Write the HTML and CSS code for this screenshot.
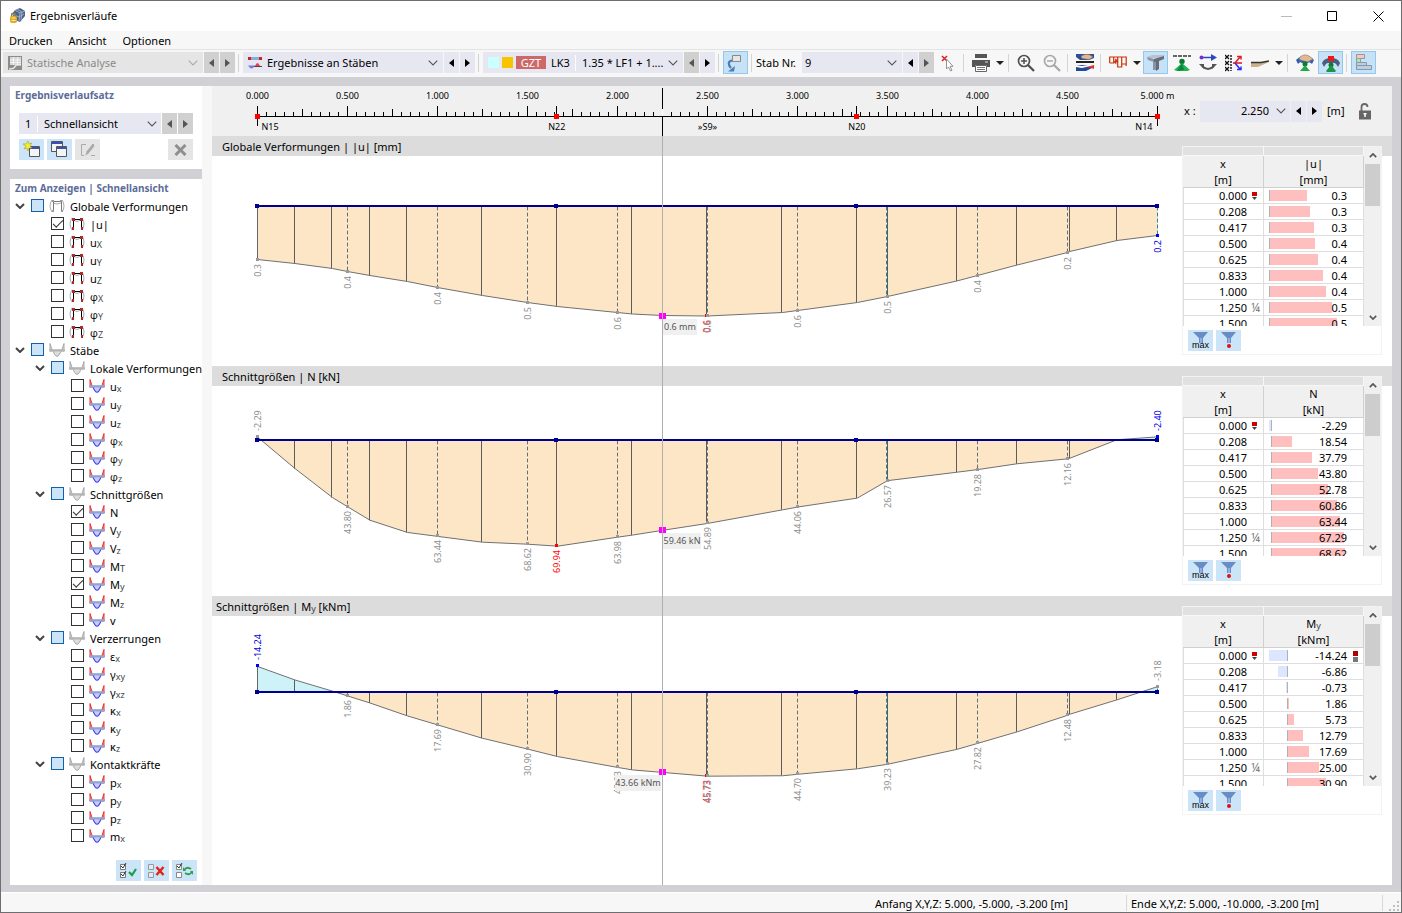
FILE: index.html
```html
<!DOCTYPE html>
<html lang="de">
<head>
<meta charset="utf-8">
<title>Ergebnisverläufe</title>
<link rel="stylesheet" href="styles.css">
</head>
<body>
<svg class="sprite" aria-hidden="true">
  <symbol id="i-chev" viewBox="0 0 10 6"><path d="M.7.7 5 5 9.300.7" fill="none" stroke="currentColor" stroke-width="1.1"/></symbol>
  <symbol id="i-twist" viewBox="0 0 10 6"><path d="M1 1l4 4 4-4" fill="none" stroke="currentColor" stroke-width="2"/></symbol>
  <symbol id="i-left" viewBox="0 0 5 8"><path d="M5 0v8L0 4z" fill="currentColor"/></symbol>
  <symbol id="i-right" viewBox="0 0 5 8"><path d="M0 0v8l5-4z" fill="currentColor"/></symbol>
  <symbol id="i-down" viewBox="0 0 8 4"><path d="M0 0h8L4 4z" fill="#222"/></symbol>
  <symbol id="i-frame" viewBox="0 0 16 14"><path d="M3 1Q-1 7 3 13M13 1q4 6 0 12M4 3q4 3 8 0" fill="none" stroke="#aaa"/><path d="M4.500 12V2.500h8V12" fill="none" stroke="#000"/><path d="M3 1h3v3H3zM11 1h3v3h-3zM3 10h2v3H3zM12 10h2v3h-2z" fill="#b02a2a"/><path d="M6 2.500h5" stroke="#000"/></symbol>
  <symbol id="i-frame-g" viewBox="0 0 16 14"><path d="M3 1Q-1 7 3 13M13 1q4 6 0 12M4 4q4 2 8 0" fill="none" stroke="#aaa"/><path d="M4.500 12V2.500h8V12" fill="none" stroke="#777"/><path d="M3 1h2v2H3zM11 1h2v2h-2zM3 11h2v2H3zM12 11h2v2h-2z" fill="#999"/></symbol>
  <symbol id="i-curve" viewBox="0 0 16 14"><path d="M4 7q2 6 4 6t4-6z" fill="#c9c9ff"/><path d="M3.500 7Q6 13.300 8 13.300T12.500 7" fill="none" stroke="#3c3cf5" stroke-width="1.100"/><path d="M1 .5V8h2.500zM15 .5V8h-2.500z" fill="#f7a0a0" stroke="#ef2020" stroke-width=".9"/><path d="M0 6.200h16v2.300H0z" fill="#8ea6cc"/></symbol>
  <symbol id="i-curve-g" viewBox="0 0 16 14"><path d="M4 7q2 6 4 6t4-6z" fill="#ddd"/><path d="M3.500 7Q6 13.300 8 13.300T12.500 7" fill="none" stroke="#a0a0a0"/><path d="M1 .5V8h2.500zM15 .5V8h-2.500z" fill="#ddd" stroke="#a0a0a0" stroke-width=".9"/><path d="M0 6.200h16v2.300H0z" fill="#b4b4b4"/></symbol>
  <symbol id="i-filter" viewBox="0 0 15 11"><path d="M0 0h15L10 6v5H6V6z" fill="#6a8cc4"/><path d="M7 6h2v5H7z" fill="#8fb0e8"/></symbol>
</svg>

<div class="window">
  <header class="titlebar">
    <svg class="app-icon" width="16" height="16" viewBox="0 0 16 16"><path d="M6 2 11 0l5 3v5l-5 6-5-2-3-6z" fill="#4d6488"/><path d="M6 2l5 3 5-2M11 5l-1 8M3 6l7 3 5-3M8 1l5 3-1 8" fill="none" stroke="#a9bdd8" stroke-width=".8"/><path d="M2.500 9V7q0-2 2-2t2 2v2" fill="none" stroke="#8d7c3a" stroke-width="1.200"/><rect x="1" y="8" width="7" height="7" rx="2" fill="#dfa827"/><path d="M2.500 10h4M2.500 12.500h4" stroke="#fff0a8"/></svg>
    <h1>Ergebnisverläufe</h1>
    <div class="win-buttons">
      <button aria-label="Minimieren"><svg width="11" height="11" viewBox="0 0 11 11"><path d="M0 5.500h11" stroke="#bbb"/></svg></button>
      <button aria-label="Maximieren"><svg width="11" height="11" viewBox="0 0 11 11"><path d="M.5.5h9v9h-9z" fill="none" stroke="#000"/></svg></button>
      <button aria-label="Schließen"><svg width="11" height="11" viewBox="0 0 11 11"><path d="M.5.5l10 10M10.500.5l-10 10" stroke="#000"/></svg></button>
    </div>
  </header>

  <nav class="menubar">
    <button>Drucken</button><button>Ansicht</button><button>Optionen</button>
  </nav>

  <div class="toolbar">
    <div class="combo combo-l off">
      <svg width="14" height="14" viewBox="0 0 14 14"><path d="M0 0h14v14H0z" fill="#8c8c8c"/><path d="M2 1h11v8H2z" fill="#d6d6d6"/><path d="M2 4h11M2 6.500h11M5.500 1v8M9.500 1v8" stroke="#fff" stroke-width=".7"/><path d="M1 13q5 0 6-2.500T13 9" fill="none" stroke="#eee" stroke-width="1.500"/></svg>
      <select aria-label="Analyse" disabled><option>Statische Analyse</option></select><svg class="chev"><use href="#i-chev"/></svg>
    </div>
    <button class="step off" aria-label="Vorherige Analyse"><svg><use href="#i-left"/></svg></button>
    <button class="step off" aria-label="Nächste Analyse"><svg><use href="#i-right"/></svg></button>
    <i class="sep"></i>
    <div class="combo combo-l">
      <svg width="14" height="14" viewBox="0 0 14 14"><path d="M2 2.500h10" stroke="#7fb0e0" stroke-width="3"/><path d="M0 1h3v3H0zM11 1h3v3h-3z" fill="#d02020"/><path d="M5 10.500h9" stroke="#444"/><path d="M7 10q2.500-6 5 0z" fill="#e24545"/><path d="M0 9.500h7q-3.500 6-7 0z" fill="#7a7ae0"/></svg>
      <select aria-label="Ergebnisse"><option>Ergebnisse an Stäben</option></select><svg class="chev"><use href="#i-chev"/></svg>
    </div>
    <button class="step" aria-label="Vorherige Ergebnisse"><svg><use href="#i-left"/></svg></button>
    <button class="step" aria-label="Nächste Ergebnisse"><svg><use href="#i-right"/></svg></button>
    <i class="sep"></i>
    <div class="combo combo-l load">
      <i class="swatch cyan"></i><i class="swatch gold"></i><span class="badge">GZT</span><span class="lk">LK3</span>
      <select aria-label="Lastkombination"><option>1.35 * LF1 + 1....</option></select><svg class="chev"><use href="#i-chev"/></svg>
    </div>
    <button class="step off" aria-label="Vorherige Lastkombination"><svg><use href="#i-left"/></svg></button>
    <button class="step" aria-label="Nächste Lastkombination"><svg><use href="#i-right"/></svg></button>
    <i class="sep"></i>
    <button class="tool on" aria-label="Synchronisieren"><svg width="17" height="18" viewBox="0 0 17 18"><path d="M5.500 1.500h8v6h-8z" fill="#e6e6e6" stroke="#888"/><path d="M5 6.500Q-1 8 4 14" fill="none" stroke="#4a7cb5" stroke-width="2.200"/><path d="M8 12l-1 5.500H1z" fill="#4a7cb5"/></svg></button>
    <i class="sep"></i>
    <label class="lbl" for="stab">Stab Nr.</label>
    <div class="combo combo-s"><select id="stab"><option>9</option></select><svg class="chev"><use href="#i-chev"/></svg></div>
    <button class="step" aria-label="Vorheriger Stab"><svg><use href="#i-left"/></svg></button>
    <button class="step off" aria-label="Nächster Stab"><svg><use href="#i-right"/></svg></button>
    <button class="tool" aria-label="Stab wählen"><svg width="14" height="18" viewBox="0 0 14 18"><path d="M1 2l5 5M6 2 1 7" stroke="#e02020" stroke-width="1.500"/><path d="M5.500 5v10l2-2 2 4 1.500-.7-2-4H12z" fill="#fff" stroke="#888" stroke-width=".9"/></svg></button>
    <i class="sep"></i>
    <button class="tool" aria-label="Drucken"><svg width="18" height="18" viewBox="0 0 18 18"><path d="M3 0h12v4H3zM0 6h18v7h-3v-2H3v2H0z" fill="#555"/><path d="M3.500 11.500h11v6h-11z" fill="#fff" stroke="#666"/><path d="M5 13.500h8M5 15.500h8" stroke="#777"/><path d="M13 8h3" stroke="#ddd"/></svg></button>
    <button class="drop" aria-label="Druckoptionen"><svg><use href="#i-down"/></svg></button>
    <i class="sep"></i>
    <button class="tool" aria-label="Vergrößern"><svg width="18" height="18" viewBox="0 0 18 18"><circle cx="7" cy="7" r="5.500" fill="none" stroke="#505050" stroke-width="1.700"/><path d="M4 7h6M7 4v6" stroke="#505050" stroke-width="1.500"/><path d="M11 11l6 6" stroke="#505050" stroke-width="2.300"/></svg></button>
    <button class="tool" aria-label="Verkleinern"><svg width="18" height="18" viewBox="0 0 18 18"><circle cx="7" cy="7" r="5.500" fill="none" stroke="#a8a8a8" stroke-width="1.700"/><path d="M4 7h6" stroke="#a8a8a8" stroke-width="1.500"/><path d="M11 11l6 6" stroke="#a8a8a8" stroke-width="2.300"/></svg></button>
    <i class="sep"></i>
    <button class="tool" aria-label="Ergebnisdiagramm"><svg width="18" height="17" viewBox="0 0 18 17"><path d="M0 0h18v4l-5 2H4L0 3z" fill="#2c4f98"/><path d="M5 2q5-3 9-1l3 2-4 2.500-7-1z" fill="#e0b898" stroke="#8c6a50" stroke-width=".6"/><path d="M0 7h18v2H0z" fill="#222"/><path d="M0 11h18v2l-8 4H0z" fill="#24489a"/><path d="M8 13l10-3v5q-4-2-10-2z" fill="#d23b3b"/><path d="M0 11l6 1 12-2v1L6 14l-6-1z" fill="#fff"/></svg></button>
    <i class="sep"></i>
    <button class="tool" aria-label="Verlauf"><svg width="18" height="14" viewBox="0 0 18 14"><path d="M.7 7V1h16.500v9M.7 7h4V1M4.700 5l2 2V3l2 4V1M8.700 7v4h4V1M12.700 8h4.500" fill="none" stroke="#c8330c" stroke-width="1.200"/></svg></button>
    <button class="drop" aria-label="Verlaufsoptionen"><svg><use href="#i-down"/></svg></button>
    <button class="tool on" aria-label="Querschnitt"><svg width="18" height="17" viewBox="0 0 18 17"><path d="M0 3l5-2h13l-4 3H2z" fill="#b9c2ce"/><path d="M0 3l7 2v3L1 6zM6 6h4v10H6z" fill="#8a94a2"/><path d="M7 5l10-3v3l-5 2v8l-3 2V8H7z" fill="#646d7a"/></svg></button>
    <button class="tool" aria-label="Lager"><svg width="18" height="18" viewBox="0 0 18 18"><path d="M0 2h18" stroke="#666" stroke-width="2" stroke-dasharray="4 1"/><circle cx="9" cy="7.500" r="2.700" fill="#067a2e"/><path d="M9 9l8 7-3 1H4l-3-1z" fill="#26b057"/><path d="M9 9l2 7-7 1z" fill="#0b8738"/></svg></button>
    <button class="tool" aria-label="Richtung"><svg width="18" height="17" viewBox="0 0 18 17"><path d="M2 3.500h12" stroke="#2a48c0" stroke-width="1.500"/><path d="M12 0l6 3.500L12 7z" fill="#2a48c0"/><circle cx="2.500" cy="3.500" r="2" fill="#7a30d0"/><path d="M3 12q6 6 12 0" fill="none" stroke="#555" stroke-width="1.800"/><path d="M0 10h5v5zM18 10h-5v5z" fill="#555"/></svg></button>
    <button class="tool" aria-label="Lasten"><svg width="18" height="18" viewBox="0 0 18 18"><path d="M0 1l4 4M4 1 0 5M0 7l4 4M4 7l-4 4M0 13l4 4M4 13l-4 4" stroke="#111" stroke-width="1.300"/><path d="M6 1v16" stroke="#222" stroke-width="1.500" stroke-dasharray="2 1"/><path d="M8 9h9" stroke="#e02020" stroke-width="1.600"/><path d="M10 9l5-6M12 2.500h4v3" fill="none" stroke="#e02020" stroke-width="1.500"/><path d="M10 9l5 6M12 15.500h4v-3" fill="none" stroke="#2a2aff" stroke-width="1.500"/></svg></button>
    <button class="tool" aria-label="Glättung"><svg width="18" height="8" viewBox="0 0 18 8"><path d="M0 3h18L7 8H0z" fill="#cbb08b"/><path d="M0 3.500h10L18 2" fill="none" stroke="#333" stroke-width="1.500"/></svg></button>
    <button class="drop" aria-label="Glättungsoptionen"><svg><use href="#i-down"/></svg></button>
    <i class="sep"></i>
    <button class="tool" aria-label="Lager anzeigen"><svg width="18" height="18" viewBox="0 0 18 18"><path d="M0 6q8-8 18 0l-2 4q-3-3-4-1H6q-2-2-4 1z" fill="#2f62b4"/><path d="M3 4q5-5 10-2l4 3-5 3-8-2z" fill="#e0b898" stroke="#8c6a50" stroke-width=".6"/><circle cx="9" cy="10" r="2.500" fill="#0a7c30"/><path d="M9 11l5 6H4z" fill="#22a850"/></svg></button>
    <button class="tool on" aria-label="Lagerergebnisse"><svg width="18" height="18" viewBox="0 0 18 18"><path d="M0 9q2-5 9-5t9 5l-2 4q-2-4-4-4H6q-2 0-4 4z" fill="#4a5e80"/><path d="M6 2h6v5H6z" fill="#ef1818"/><circle cx="9" cy="11" r="2.500" fill="#0a7c30"/><path d="M9 11l5 6-1 1H5l-1-1z" fill="#1b9546"/></svg></button>
    <i class="sep"></i>
    <button class="tool on" aria-label="Wertetabelle"><svg width="18" height="17" viewBox="0 0 18 17"><path d="M1.500.5h8v4h-8z" fill="#f4c6c6" stroke="#999"/><path d="M1.500 4.500h4v4h-4z" fill="#b8e0b8" stroke="#8aa88a"/><path d="M1.500 8.500h10v3h-10zM1.500 11.500h15v4h-15z" fill="#b9cfe2" stroke="#8898a8"/></svg></button>
  </div>

  <main class="main">
    <aside class="side">
      <section class="set-panel">
        <h2>Ergebnisverlaufsatz</h2>
        <div class="set-row">
          <div class="combo grow"><span class="num">1</span><select aria-label="Ergebnisverlaufsatz"><option>Schnellansicht</option></select><svg class="chev"><use href="#i-chev"/></svg></div>
          <button class="step off" aria-label="Vorheriger Satz"><svg><use href="#i-left"/></svg></button>
          <button class="step off" aria-label="Nächster Satz"><svg><use href="#i-right"/></svg></button>
        </div>
        <div class="set-tools">
          <button class="sq" aria-label="Neu"><svg width="18" height="17" viewBox="0 0 18 17"><path d="M6.500 5.500h10v10h-10z" fill="#f4f4f4" stroke="#555"/><path d="M7 6h9v2H7z" fill="#3a50b8"/><path d="M5 0l1 3 3-1-2 3 2 2-3 0-1 3-1-3-3 1 2-3-3-2h3z" fill="#f5ee30" stroke="#a09020" stroke-width=".5"/></svg></button>
          <button class="sq" aria-label="Kopieren"><svg width="17" height="17" viewBox="0 0 17 17"><path d="M.5.5h11v10H.5z" fill="#f4f4f4" stroke="#555"/><path d="M1 1h10v2H1z" fill="#3a50b8"/><path d="M5.500 5.500h10v10h-10z" fill="#f4f4f4" stroke="#555"/><path d="M6 6h9v2H6z" fill="#3a50b8"/></svg></button>
          <button class="sq off" aria-label="Bearbeiten"><svg width="16" height="14" viewBox="0 0 16 14"><path d="M6 1.500H1.500v11H4M12 1.500h2M11 12.500h4" fill="none" stroke="#aaa"/><path d="M5.500 12.500l1-4 6-7.500 2 2-6 7.500z" fill="#aaa"/></svg></button>
          <button class="sq off last" aria-label="Löschen"><svg width="13" height="12" viewBox="0 0 13 12"><path d="M1.500 1l10 10M11.500 1l-10 10" stroke="#8f8f8f" stroke-width="3"/></svg></button>
        </div>
      </section>
      <section class="tree-panel">
        <h2>Zum Anzeigen | Schnellansicht</h2>
        <ul class="tree" id="tree"></ul>
        <div class="tree-tools">
          <button class="sq" aria-label="Alle auswählen"><svg width="17" height="16" viewBox="0 0 17 16"><path d="M.5 1.500h5v5h-5zM.5 9.500h5v5h-5z" fill="#fff" stroke="#777"/><path d="M1 3l2 2 3-5M1 11l2 2 3-5" fill="none" stroke="#333"/><path d="M9 9l3 3 4-6" fill="none" stroke="#18a048" stroke-width="2.200"/></svg></button>
          <button class="sq" aria-label="Alle abwählen"><svg width="17" height="16" viewBox="0 0 17 16"><path d="M.5 1.500h5v5h-5zM.5 9.500h5v5h-5z" fill="#dcecf8" stroke="#999"/><path d="M8.500 4l7 8M15.500 4l-7 8" stroke="#e02418" stroke-width="2.500"/></svg></button>
          <button class="sq" aria-label="Auswahl umkehren"><svg width="17" height="16" viewBox="0 0 17 16"><path d="M.5 1.500h5v5h-5zM.5 9.500h5v5h-5z" fill="#fff" stroke="#888"/><path d="M1 3l2 2 3-5" fill="none" stroke="#333"/><path d="M8 7q3-4 7-1M16 9q-3 4-7 1" fill="none" stroke="#2fa050" stroke-width="1.800"/><path d="M7 4v4h3zM17 12V8h-3z" fill="#2fa050"/></svg></button>
        </div>
      </section>
    </aside>
    <div class="splitter"></div>
    <div class="results">
      <div class="ruler-area">
        <svg class="ruler" id="ruler"></svg>
        <div class="xpos">
          <label for="xval">x :</label>
          <div class="combo xcombo"><input id="xval" value="2.250"><svg class="chev"><use href="#i-chev"/></svg></div>
          <button class="step" aria-label="x verringern"><svg><use href="#i-left"/></svg></button>
          <button class="step" aria-label="x erhöhen"><svg><use href="#i-right"/></svg></button>
          <span class="unit">[m]</span>
          <button class="lock" aria-label="Position sperren"><svg width="14" height="17" viewBox="0 0 14 17"><path d="M3.500 8V4q0-3 3-3t3 3" fill="none" stroke="#666" stroke-width="1.800"/><path d="M1 7.500h12v9H1z" fill="#666"/><path d="M6.300 10h1.500v4H6.300zM5.500 10h3v1.500h-3z" fill="#fff"/></svg></button>
        </div>
      </div>
      <div class="charts" id="charts"></div>
    </div>
  </main>

  <footer class="statusbar">
    <span class="start">Anfang X,Y,Z: 5.000, -5.000, -3.200 [m]</span>
    <span class="end">Ende X,Y,Z: 5.000, -10.000, -3.200 [m]</span>
    <svg class="grip" width="11" height="11" viewBox="0 0 11 11"><path d="M8 0h2v2H8zM4 4h2v2H4zM8 4h2v2H8zM0 8h2v2H0zM4 8h2v2H4zM8 8h2v2H8z" fill="#c0c0c0"/></svg>
  </footer>
</div>
<script src="app.js"></script>
</body>
</html>
```
FILE: styles.css
```css
* { box-sizing: border-box; }

body {
  margin: 0;
  font: 11px/16px "Noto Sans", "Open Sans", sans-serif;
  color: #000;
}

button, input, select {
  font: inherit;
  color: inherit;
  border: 0;
  padding: 0;
  margin: 0;
  background: none;
}

h1, h2, h3 { margin: 0; font-size: 11px; font-weight: 400; }
i { font-style: normal; }
svg { display: block; flex: none; }
.sprite { position: absolute; width: 0; height: 0; }

.window {
  display: flex;
  flex-direction: column;
  height: 100vh;
  min-height: 880px;
  border: 1px solid #6e6e70;
  background: #f7f7f7;
}

/* title and menu */
.titlebar {
  display: flex;
  align-items: center;
  height: 30px;
  flex: none;
  padding-left: 8px;
  background: #fff;
}
.titlebar h1 { margin-left: 5px; }
.win-buttons { display: flex; margin-left: auto; }
.win-buttons button {
  display: grid;
  place-items: center;
  width: 46px;
  height: 28px;
}
.menubar {
  display: flex;
  gap: 16px;
  height: 19px;
  flex: none;
  padding: 2px 0 0 8px;
  border-bottom: 1px solid #e3e3e3;
}

/* toolbar */
.toolbar {
  display: flex;
  align-items: center;
  gap: 1px;
  height: 27px;
  flex: none;
  padding: 0 0 2px 2px;
}
.combo {
  display: flex;
  align-items: center;
  height: 21px;
  padding: 0 5px;
  background: #e7e7f2;
}
.combo-l { width: 200px; }
.combo-s { width: 100px; padding-left: 3px; }
.combo select, .combo input {
  flex: 1;
  min-width: 0;
  appearance: none;
  outline: 0;
}
.combo > svg + select { margin-left: 5px; }
.combo.off { background: #e5e5e5; color: #8a8a8a; }
.combo select:disabled { opacity: 1; }
.chev { width: 10px; height: 6px; color: #555; }
.combo.off .chev { color: #aaa; }
.step {
  display: grid;
  place-items: center;
  width: 15px;
  height: 21px;
  background: #e7e7f2;
}
.toolbar .step, .xpos .step { padding-right: 1px; }
.step svg { width: 5px; height: 8px; }
.step.off { background: #d0d0d0; color: #555; }
.sep {
  width: 1px;
  height: 18px;
  margin: 0 3px 0 2px;
  background: #d4d4d4;
}
.swatch { width: 11px; height: 11px; margin-right: 3px; }
.cyan { background: #ccffff; }
.gold { background: #f6c400; }
.badge {
  width: 30px;
  height: 13px;
  line-height: 13px;
  text-align: center;
  background: #cd6a69;
  color: #fff;
}
.lk {
  width: 30px;
  height: 16px;
  padding-left: 5px;
  margin-right: 6px;
  border-right: 1px solid #fff;
}
.tool {
  display: grid;
  place-items: center;
  width: 25px;
  height: 23px;
}
.tool.on { background: #c7e2f7; border: 1px solid #90c8f0; }
.drop { display: grid; place-items: center; width: 11px; height: 21px; }
.drop svg { width: 8px; height: 4px; }
.lbl { width: 45px; white-space: nowrap; }

/* main area */
.main {
  display: flex;
  flex: 1;
  min-height: 0;
  padding: 9px 9px 7px;
  border-bottom: 1px solid #fff;
  background: #d0d0d5;
}
.side {
  display: flex;
  flex-direction: column;
  gap: 10px;
  width: 192px;
  flex: none;
}
.side h2 {
  padding-left: 5px;
  font-size: 10px;
  font-weight: 700;
  line-height: 18px;
  color: #5c6d98;
  white-space: nowrap;
}
.set-panel { height: 83px; background: #fff; }
.set-row { display: flex; gap: 1px; padding: 9px 9px 0; }
.set-row .combo { padding: 0 4px 0 6px; }
.grow { flex: 1; }
.num { width: 13px; margin-right: 6px; border-right: 1px solid #fff; }
.set-tools { display: flex; gap: 3px; padding: 5px 9px 0; }
.sq {
  display: grid;
  place-items: center;
  width: 25px;
  height: 21px;
  background: #cce4f7;
}
.sq.off { background: #e5e5e5; }
.sq.last { margin-left: auto; }

.tree-panel {
  display: flex;
  flex-direction: column;
  flex: 1;
  min-height: 0;
  background: #fff;
}
.tree { margin: 0; padding: 0 0 0 5px; list-style: none; }
.tree li {
  display: flex;
  align-items: center;
  height: 18px;
  white-space: nowrap;
}
.tree .lvl1 { padding-left: 20px; }
.tree .lvl2 { padding-left: 40px; }
.twist { width: 10px; height: 6px; margin-right: 6px; color: #444; }
.twist svg { width: 10px; height: 6px; }
.tree input {
  appearance: none;
  display: grid;
  place-items: center;
  width: 13px;
  height: 13px;
  margin-bottom: 2px;
  flex: none;
  border: 1px solid #333;
  background: #fff;
}
.tree input.mixed { background: #cce4f7; border-color: #1260a8; }
.tree input:checked::after {
  content: "";
  width: 9px;
  height: 4px;
  margin-bottom: 2px;
  border: solid #333;
  border-width: 0 0 1px 1px;
  transform: rotate(-45deg);
}
.tree label { display: flex; align-items: center; }
.tree label svg { width: 16px; height: 14px; margin: 0 5px; }
.name { padding-top: 2px; }
.greek { font-family: "Open Sans", "Noto Sans", sans-serif; }
sub { font-size: 9px; line-height: 0; vertical-align: -1px; color: #444; }
.tree-tools {
  display: flex;
  justify-content: flex-end;
  gap: 3px;
  margin-top: auto;
  padding: 0 5px 4px;
}
.splitter { width: 10px; flex: none; background: #f7f7f7; }

/* results */
.results {
  display: flex;
  flex-direction: column;
  flex: 1;
  min-width: 0;
  background: #fff;
}
.ruler-area {
  display: grid;
  align-items: center;
  height: 50px;
  flex: none;
  background: #f0f0f0;
}
.ruler { grid-area: 1 / 1; width: 100%; height: 50px; }
.ruler text { font-size: 9px; text-anchor: middle; }
.ruler .from { text-anchor: start; }
.ruler .to { text-anchor: end; }
.xpos {
  grid-area: 1 / 1;
  justify-self: end;
  display: flex;
  align-items: center;
  gap: 1px;
  padding-right: 20px;
}
.xpos label { width: 15px; }
.xcombo { width: 90px; padding-right: 4px; }
.xcombo input { text-align: right; margin-right: 7px; }
.unit { width: 34px; padding-left: 4px; }

.charts { position: relative; display: flex; flex-direction: column; flex: 1; }
.chart { position: relative; height: 230px; }
.chart:last-of-type { flex: 1; }
.chart h3 {
  height: 20px;
  padding: 3px 10px 0;
  background: #dcdcdc;
}
.chart:last-of-type h3 { padding-left: 4px; }
.plot { width: 100%; height: 210px; }
.plot text { font-size: 9px; fill: #8e8e8e; }
.plot .min { fill: #0000e8; }
.plot .max { fill: #f00; }
.plot .tag-text { fill: #555; text-anchor: middle; }
.cursor {
  position: absolute;
  top: 0;
  bottom: 0;
  left: calc(45px + (100% - 280px) * 0.45);
  width: 1px;
  background: #b0b0b0;
}

/* value table over the chart */
.values {
  position: absolute;
  top: 10px;
  right: 10px;
  width: 200px;
  border: 1px solid #f3f3f3;
  background: #fff;
}
.grid-box { display: flex; height: 179px; }
.clip { flex: 1; overflow: hidden; }
.clip table {
  width: 181px;
  table-layout: fixed;
  border-collapse: separate;
  border-spacing: 0;
}
.clip col:first-child { width: 81px; }
.clip th, .clip td {
  position: relative;
  padding: 0;
  font-weight: 400;
  border-right: 1px solid #dedede;
}
.strip th { height: 10px; background: #e1e1e1; border-color: #f7f7f7; border-bottom: 1px solid #f7f7f7; }
.head th { height: 32px; line-height: 16px; background: #f0f0f0; border-color: #d0d0d0; vertical-align: top; }
.head th { box-shadow: inset 0 -1px #d0d0d0; }
.clip td {
  height: 16px;
  line-height: 15px;
  padding-right: 16px;
  border-bottom: 1px solid #dedede;
  text-align: right;
}
.strip th { height: 9px; }
.clip td:first-child { border-left: 1px solid #dedede; }
.clip td span { position: relative; }
.bar { position: absolute; top: 2px; height: 11px; background: #ffbfbf; }
.bar.neg { background: #dce6ff; }
.zero { position: absolute; top: 2px; width: 1px; height: 11px; background: #b0b0b8; }
.mark { position: absolute; right: 5px; top: 3px; }
.clip td .quarter { position: absolute; right: 3px; top: 0; font-size: 12px; color: #777; }
.scroll {
  display: flex;
  flex-direction: column;
  align-items: center;
  width: 17px;
  padding: 6px 1px;
  background: #f0f0f0;
}
.scroll svg { width: 8px; height: 5px; stroke: #555; color: #555; }
.thumb { width: 15px; height: 42px; margin-top: 6px; background: #cdcdcd; }
.scroll .dn { margin-top: auto; transform: rotate(180deg); }
.filters { display: flex; gap: 3px; height: 28px; padding: 4px 5px 0; }
.filters .sq { position: relative; align-items: start; padding: 2px 1px 0 0; }
.filters .sq span {
  position: absolute;
  bottom: 0;
  font: 9px/12px "Liberation Sans", sans-serif;
}
.dot { position: absolute; bottom: 3px; width: 4px; height: 4px; border-radius: 2px; background: #e01010; }

/* status bar */
.statusbar {
  display: flex;
  align-items: center;
  justify-content: flex-end;
  height: 19px;
  flex: none;
}
.statusbar span { white-space: nowrap; line-height: 15px; padding-top: 1px; border-right: 1px solid #d8d8d8; }
.start { width: 252px; }
.end { width: 256px; padding-left: 4px; }
.grip { align-self: flex-end; margin: 0 1px 0 6px; }
```
FILE: app.js
```js
// Tree of available result types: [level, label, state]
const F = 'frame', C = 'curve';
const tree = [
  [0, 'Globale Verformungen', 'mixed', F], [1, '|u|', 'on', F], [1, 'u_X', '', F], [1, 'u_Y', '', F],
  [1, 'u_Z', '', F], [1, 'φ_X', '', F], [1, 'φ_Y', '', F], [1, 'φ_Z', '', F],
  [0, 'Stäbe', 'mixed', C],
  [1, 'Lokale Verformungen', 'mixed', C], [2, 'u_x', ''], [2, 'u_y', ''], [2, 'u_z', ''],
  [2, 'φ_x', ''], [2, 'φ_y', ''], [2, 'φ_z', ''],
  [1, 'Schnittgrößen', 'mixed', C], [2, 'N', 'on'], [2, 'V_y', ''], [2, 'V_z', ''], [2, 'M_T', ''],
  [2, 'M_y', 'on'], [2, 'M_z', ''], [2, 'v', ''],
  [1, 'Verzerrungen', 'mixed', C], [2, 'ε_x', ''], [2, 'γ_xy', ''], [2, 'γ_xz', ''],
  [2, 'κ_x', ''], [2, 'κ_y', ''], [2, 'κ_z', ''],
  [1, 'Kontaktkräfte', 'mixed', C], [2, 'p_x', ''], [2, 'p_y', ''], [2, 'p_z', ''], [2, 'm_x', '']
];
const withSub = s => s.replace(/_(\w+)/, '<sub>$1</sub>');

document.getElementById('tree').innerHTML = tree.map(([lvl, label, state, icon = C], i) => {
  const group = state === 'mixed';
  return `<li class="lvl${lvl}">
    <span class="twist">${group ? '<svg><use href="#i-twist"/></svg>' : ''}</span>
    <input type="checkbox" id="t${i}" class="${state}" ${state === 'on' ? 'checked' : ''}>
    <label for="t${i}"><svg><use href="#i-${icon}${group ? '-g' : ''}"/></svg><span class="name${label[0] === 'φ' ? ' greek' : ''}">${withSub(label)}</span></label>
  </li>`;
}).join('');

// Result diagrams along the member. Points: [x in m, value].
const solid = [0.208, 0.417, 0.625, 0.833, 1.25, 1.667, 2.083, 2.499, 2.917, 3.333, 3.506, 3.885, 4.22, 4.514, 4.777];
const dashed = [0.5, 1, 1.5, 2, 2.5, 3, 3.494, 4, 4.5];
const nodes = [0, 1.663, 3.33, 5];
const xs = [0, 0.208, 0.417, 0.5, 0.625, 0.833, 1, 1.25, 1.5, 1.667, 2, 2.083, 2.25, 2.5, 2.917, 3, 3.333, 3.5, 3.885, 4, 4.22, 4.5, 4.512, 4.775, 5];
const rowX = ['0.000', '0.208', '0.417', '0.500', '0.625', '0.833', '1.000', '1.250', '1.500'];

const charts = [
  {
    title: 'Globale Verformungen | |u| [mm]', head: '|u|', unit: '[mm]', base: 50, scale: 1, ends: true,
    y: [53, 57, 62, 65, 69, 75, 81, 89, 96, 100, 106, 107.500, 109, 109.500, 106, 104, 96, 90, 74.500, 69, 58.500, 46, 45, 34, 29],
    labels: [[0, '0.3'], [.5, '0.4'], [1, '0.4'], [1.5, '0.5'], [2, '0.6'], [2.495, '0.6', 'max'], [2.5, '0.6'], [3, '0.6'], [3.5, '0.5'], [4, '0.4'], [4.5, '0.2'], [5, '0.2', 'min']],
    tag: '0.6 mm', tagW: 34, zero: 5, perPx: [38, 41, 45, 46, 49, 54, 57, 63, 68],
    rows: ['0.3', '0.3', '0.3', '0.4', '0.4', '0.4', '0.4', '0.5', '0.5']
  },
  {
    title: 'Schnittgrößen | N [kN]', head: 'N', unit: '[kN]', base: 54, scale: 1.511,
    y: [-2.29, 18.54, 37.79, 43.8, 52.78, 60.86, 63.44, 67.29, 68.62, 69.94, 63.98, 62.6, 59.46, 54.89, 45.9, 44.06, 38.1, 26.57, 21, 19.28, 15.4, 12.16, 11.8, -.5, -2.4],
    labels: [[0, '-2.29'], [.5, '43.80'], [1, '63.44'], [1.5, '68.62'], [1.663, '69.94', 'max'], [2, '63.98'], [2.5, '54.89'], [3, '44.06'], [3.5, '26.57'], [4, '19.28'], [4.5, '12.16'], [5, '-2.40', 'min']],
    tag: '59.46 kN', tagW: 38, zero: 7, perPx: [-2, 21, 41, 47, 57, 66, 69, 73, 74],
    rows: ['-2.29', '18.54', '37.79', '43.80', '52.78', '60.86', '63.44', '67.29', '68.62']
  },
  {
    title: 'Schnittgrößen | M_y [kNm]', head: 'M_y', unit: '[kNm]', base: 76, scale: 1.83, ends: true,
    y: [-14.24, -6.86, -.73, 1.86, 5.73, 12.79, 17.69, 25, 30.9, 35, 40.93, 42.3, 43.66, 45.73, 45.5, 44.7, 41.7, 39.23, 31.1, 27.82, 21.5, 12.48, 11.9, 4, -3.18],
    labels: [[0, '-14.24', 'min'], [.5, '1.86'], [1, '17.69'], [1.5, '30.90'], [2, '40.93'], [2.495, '45.73', 'max'], [2.5, '45.73'], [3, '44.70'], [3.5, '39.23'], [4, '27.82'], [4.5, '12.48'], [5, '-3.18']],
    tag: '43.66 kNm', tagW: 46, left: true, zero: 23, perPx: [-18, -9, -1, 2, 7, 16, 22, 32, 39],
    rows: ['-14.24', '-6.86', '-0.73', '1.86', '5.73', '12.79', '17.69', '25.00', '30.90'], extreme: true
  }
];

function valueTable(c) {
  const rows = rowX.map((x, i) => {
    const w = c.perPx[i];
    const first = i === 0 ? '<svg class="mark" width="7" height="9"><path d="M1 1h5v4H1z" fill="#d00000"/><path d="M1 6h5L3.500 9z" fill="#444"/></svg>' : '';
    const quarter = i === 7 ? '<span class="quarter">¼</span>' : '';
    const ext = c.extreme && i === 0 ? '<svg class="mark" width="5" height="11"><path d="M0 0h5v5H0z" fill="#b00000"/><path d="M0 6h5v5H0z" fill="#777"/></svg>' : '';
    return `<tr><td>${x}${first}${quarter}</td><td><i class="bar ${w < 0 ? 'neg' : ''}" style="left:${c.zero + Math.min(w, 0)}px;width:${Math.abs(w)}px"></i><i class="zero" style="left:${c.zero}px"></i><span>${c.rows[i]}</span>${ext}</td></tr>`;
  }).join('');
  return `<div class="values"><div class="grid-box"><div class="clip"><table><colgroup><col><col></colgroup>
    <thead><tr class="strip"><th></th><th></th></tr><tr class="head"><th>x<br>[m]</th><th>${withSub(c.head)}<br>${c.unit}</th></tr></thead>
    <tbody>${rows}</tbody></table></div>
    <div class="scroll"><svg class="up" viewBox="0 0 10 6"><path d="M1 5l4-4 4 4" fill="none" stroke-width="2"/></svg><div class="thumb"></div><svg class="dn" viewBox="0 0 10 6"><path d="M1 5l4-4 4 4" fill="none" stroke-width="2"/></svg></div></div>
    <div class="filters"><button class="sq" aria-label="Nur Extremwerte"><svg width="15" height="11"><use href="#i-filter"/></svg><span>max</span></button>
    <button class="sq" aria-label="Nur Knotenwerte"><svg width="15" height="11"><use href="#i-filter"/></svg><i class="dot"></i></button></div></div>`;
}

document.getElementById('charts').innerHTML = charts.map(c =>
  `<section class="chart"><h3>${withSub(c.title)}</h3><svg class="plot"></svg>${valueTable(c)}</section>`
).join('') + '<div class="cursor"></div>';

function valueAt(c, x) {
  let i = 1;
  while (i < xs.length - 1 && xs[i] < x) i++;
  const t = (x - xs[i - 1]) / (xs[i] - xs[i - 1]);
  return c.y[i - 1] + t * (c.y[i] - c.y[i - 1]);
}

function drawChart(c, svg, px) {
  const b = c.base + .5;
  const py = x => b + valueAt(c, x) * c.scale;
  const pts = xs.map((x, i) => [px(x), b + c.y[i] * c.scale]);
  const line = pts.map(p => p.join()).join(' ');
  const id = 'c' + c.base;
  let s = `<clipPath id="${id}a"><rect width="100%" height="${b}"/></clipPath><clipPath id="${id}b"><rect y="${b}" width="100%" height="200"/></clipPath>`;
  const area = `${px(0)},${b} ${line} ${px(5)},${b}`;
  s += `<polygon points="${area}" fill="#cdf2f8" clip-path="url(#${id}a)"/><polygon points="${area}" fill="#fde6c6" clip-path="url(#${id}b)"/>`;
  const bar = (x, extra, shift = 0) => { const X = Math.floor(px(x) - shift) + .5; return `<line x1="${X}" x2="${X}" y1="${b}" y2="${py(x)}" ${extra}/>`; };
  s += solid.map(x => bar(x, 'stroke="#5c5c5c"', .7)).join('');
  s += dashed.map(x => bar(x, 'stroke="#fff"') + bar(x, `stroke="${x === 3.494 ? '#2b8a90' : '#6d6d64'}" stroke-dasharray="4 2"`)).join('');
  if (c.ends) s += bar(0, 'stroke="#666"') + bar(5, 'stroke="#2b8a90" stroke-dasharray="4 2"');
  s += `<polyline points="${line}" fill="none" stroke="#707070"/>`;
  s += `<line x1="${px(0)}" x2="${px(5)}" y1="${c.base}" y2="${c.base}" stroke="#000090" stroke-width="2"/>`;
  s += nodes.map(x => `<rect x="${Math.floor(px(x)) - 2}" y="${c.base - 2}" width="4" height="4" fill="#000090"/>`).join('');
  s += c.labels.map(([x, t, kind = '']) => {
    const X = Math.floor(px(x)), Y = Math.round(py(x));
    const up = t[0] === '-';
    const fill = kind === 'min' ? '#00f' : kind === 'max' ? '#f00' : '#999';
    return `<rect x="${X - 1}" y="${Y - 2}" width="3" height="3" fill="${fill}"/><text class="${kind}" text-anchor="${up ? 'start' : 'end'}" transform="translate(${X + 4} ${up ? Y - 6 : Y + 4}) rotate(-90)">${t}</text>`;
  }).join('');
  const X = Math.floor(px(2.25)), Y = Math.round(py(2.25));
  const tx = c.left ? X - c.tagW - 1 : X + 1;
  s += `<rect x="${X - 3}" y="${Y - 3}" width="7" height="6" fill="#f0f"/><rect x="${tx}" y="${Y + 3}" width="${c.tagW}" height="16" fill="#f0f0f0"/><text class="tag-text" x="${tx + c.tagW / 2}" y="${Y + 14}">${c.tag}</text>`;
  svg.innerHTML = s;
}

function drawRuler(svg, px) {
  const tick = (x, y1, y2) => { const X = Math.floor(px(x)) + .5; return `<line x1="${X}" x2="${X}" y1="${y1}" y2="${y2}" stroke="#000"/>`; };
  let s = `<line x1="${px(0)}" x2="${px(5)}" y1="30.5" y2="30.5" stroke="#000"/>`;
  for (let i = 0; i <= 100; i++) {
    const x = i / 20;
    s += tick(x, i % 10 === 0 ? 20 : i % 5 === 0 ? 23 : 26, i % 100 === 0 ? 40 : 30);
    if (i % 10 === 0) s += `<text x="${px(x)}" y="13">${x.toFixed(3)}${i === 100 ? ' m' : ''}</text>`;
  }
  s += nodes.map(x => tick(x, 20, 30) + `<rect x="${Math.floor(px(x)) - 2}" y="28" width="5" height="5" fill="#f00"/>`).join('');
  s += `<text class="from" x="${px(0) + 4}" y="44">N15</text><text x="${px(1.663)}" y="44">N22</text><text x="${px(2.5)}" y="44">»S9»</text><text x="${px(3.33)}" y="44">N20</text><text class="to" x="${px(5) - 5}" y="44">N14</text>`;
  s += `<line x1="${px(2.25)}" x2="${px(2.25)}" y1="20" y2="30" stroke="#fff"/>` + tick(2.25, 2, 23) + tick(2.25, 31, 50);
  svg.innerHTML = s;
}

function draw() {
  const ruler = document.getElementById('ruler');
  const w = ruler.clientWidth || ruler.getBoundingClientRect().width;
  const px = x => 45.5 + x * (w - 280) / 5;
  drawRuler(ruler, px);
  document.querySelectorAll('.plot').forEach((svg, i) => drawChart(charts[i], svg, px));
}
draw();
window.addEventListener('resize', draw);
```
